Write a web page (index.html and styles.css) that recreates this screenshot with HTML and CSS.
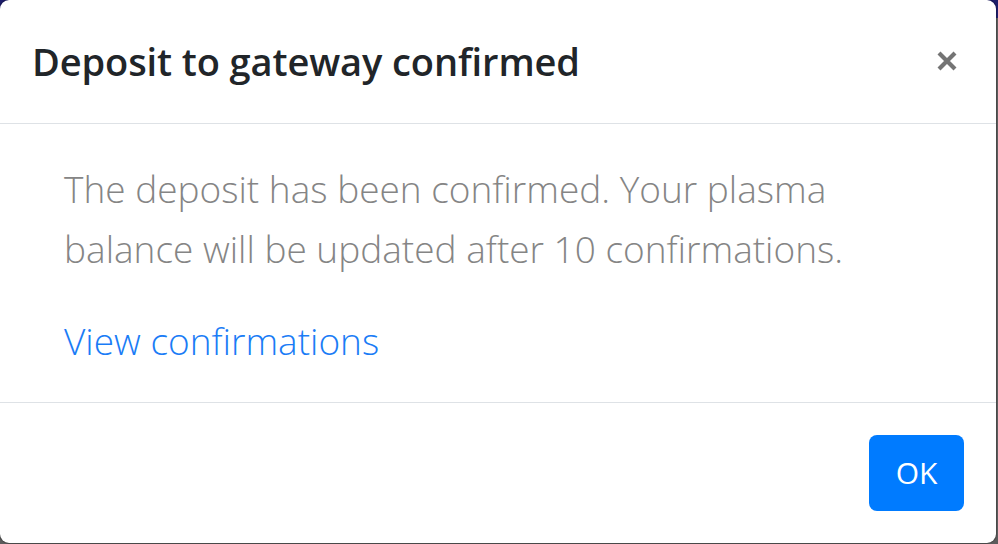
FILE: index.html
```html
<!DOCTYPE html>
<html lang="en">
<head>
<meta charset="utf-8">
<title>Deposit to gateway confirmed</title>
<link rel="stylesheet" href="styles.css">
</head>
<body>
<div class="backdrop">
  <div class="modal">
    <div class="modal-header">
      <h5 class="modal-title">Deposit to gateway confirmed</h5>
      <button class="close" type="button" aria-label="Close">
        <svg width="22" height="22" viewBox="0 0 22 22" aria-hidden="true">
          <path d="M3 3 L19 19 M19 3 L3 19" stroke="#747474" stroke-width="4.2" stroke-linecap="butt" fill="none"/>
        </svg>
      </button>
    </div>
    <div class="modal-body">
      <p class="lead">The deposit has been confirmed. Your plasma<br>balance will be updated after 10 confirmations.</p>
      <a class="lead-link" href="#">View confirmations</a>
    </div>
    <div class="modal-footer">
      <button class="btn-primary" type="button">OK</button>
    </div>
  </div>
</div>
</body>
</html>
```

FILE: styles.css
```css
* { box-sizing: border-box; }

html, body {
  margin: 0;
  padding: 0;
  width: 998px;
  height: 544px;
  overflow: hidden;
}

body {
  background: linear-gradient(to bottom, #1d1d6b 0, #1d1d6b 18px, #5c5c5c 18px, #5c5c5c 100%);
  font-family: "Open Sans", "Noto Sans", Arial, sans-serif;
}

.backdrop {
  display: flex;
  padding: 0;
  margin: -1px 0 0 -1px;
}

.modal {
  width: 998px;
  height: 545px;
  background: #fff;
  border: 1px solid rgba(0, 0, 0, 0.2);
  border-radius: 10px;
  background-clip: padding-box;
  display: flex;
  flex-direction: column;
}

.modal-header {
  display: flex;
  align-items: center;
  justify-content: space-between;
  height: 124px;
  padding: 0 38px 0 32px;
  border-bottom: 1px solid #dee2e6;
}

.modal-title {
  margin: 0;
  font-size: 38px;
  font-weight: 600;
  line-height: 60px;
  color: #212529;
  letter-spacing: -0.1px;
  padding-bottom: 2px;
}

.close {
  border: 0;
  background: transparent;
  padding: 0;
  width: 22px;
  height: 22px;
  display: flex;
  margin-bottom: 2px;
}

.modal-body {
  height: 279px;
  padding: 35px 64px 0 64px;
  border-bottom: 1px solid #dee2e6;
}

.lead {
  margin: 0 0 32px 0;
  font-size: 37px;
  font-weight: 300;
  line-height: 60px;
  color: #858585;
  letter-spacing: 0;
}

.lead-link {
  display: block;
  font-size: 37px;
  font-weight: 300;
  line-height: 60px;
  color: #1a7cf6;
  text-decoration: none;
  letter-spacing: 0;
}

.modal-footer {
  flex: 1;
  display: flex;
  justify-content: flex-end;
  align-items: flex-start;
  padding: 32px 32px 0 32px;
}

.btn-primary {
  width: 95px;
  height: 76px;
  border: 0;
  border-radius: 8px;
  background: #007bff;
  color: #fff;
  font-family: "Open Sans", "Noto Sans", Arial, sans-serif;
  font-size: 30px;
  font-weight: 400;
  line-height: 48px;
  padding: 0;
}
```
